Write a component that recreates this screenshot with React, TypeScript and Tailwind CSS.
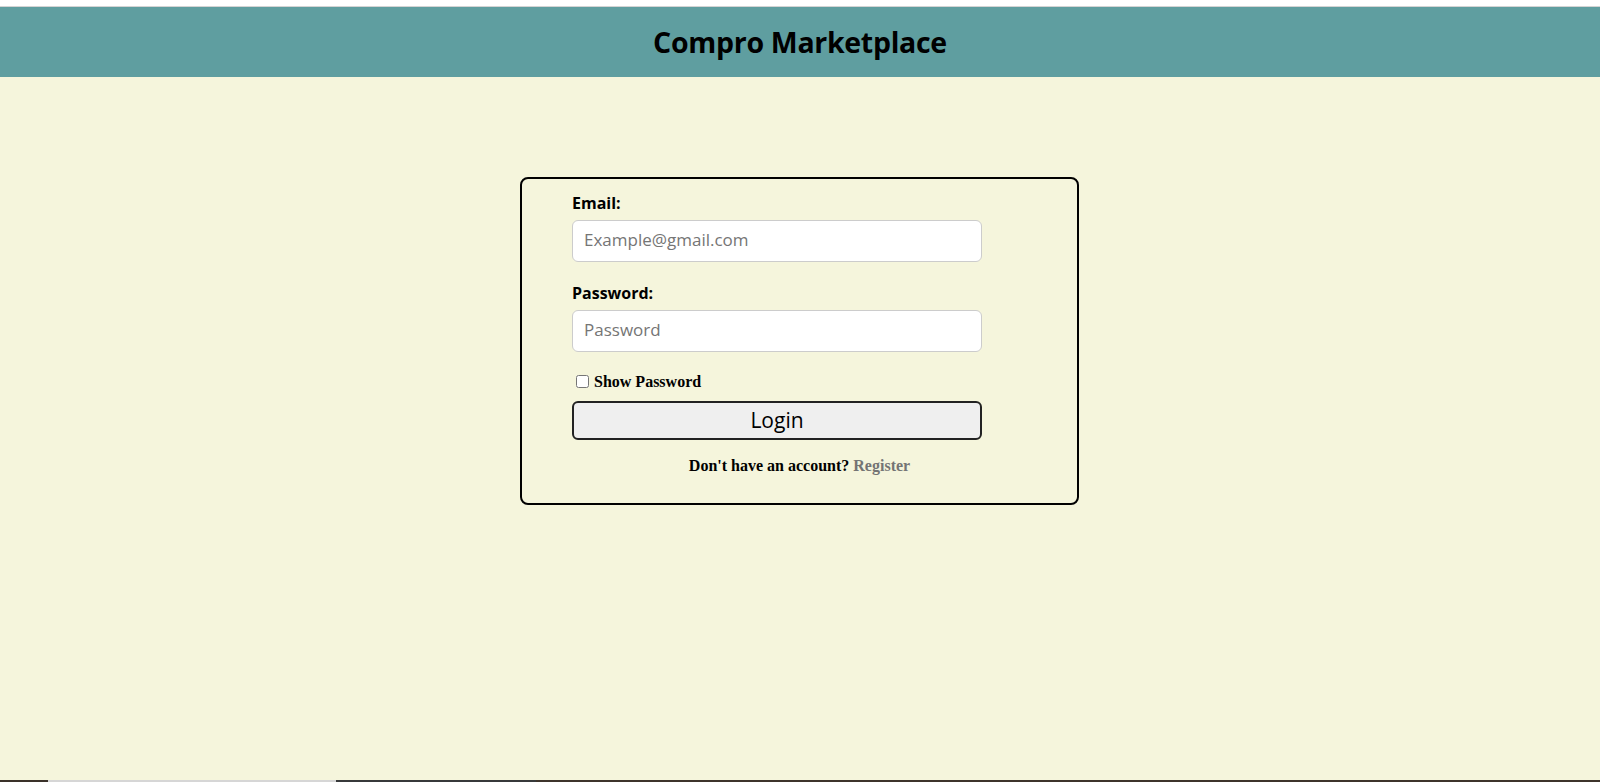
import { useState } from "react";

export default function App() {
  const [show, setShow] = useState(false);

  return (
    <div className="min-h-screen flex flex-col bg-[#f5f5dc] font-['Open_Sans',sans-serif]">
      {/* top browser edge */}
      <div className="h-[7px] bg-white border-b border-[#d4d4d4]" />

      {/* Header */}
      <header className="h-[70px] bg-[#5f9ea0] flex items-center justify-center">
        <h1 className="text-[28.5px] font-bold text-black leading-none tracking-[-0.3px]">Compro Marketplace</h1>
      </header>

      {/* Login card */}
      <main className="flex-1 flex justify-center pt-[100px] pr-[1px]">
        <div className="w-[559px] self-start border-2 border-black rounded-lg pt-[13px] pb-[28px]">
          <form className="flex flex-col pl-[50px]" onSubmit={(e) => e.preventDefault()}>
            <label className="text-[16px] font-bold leading-[22px] text-black mb-[6px]">Email:</label>
            <input
              type="email"
              placeholder="Example@gmail.com"
              className="w-[410px] h-[42px] bg-white border border-[#cccccc] rounded-md px-[11px] pb-[3px] text-[17px] placeholder:text-[#757575] outline-none"
            />

            <label className="text-[16px] font-bold leading-[22px] text-black mt-[20px] mb-[6px]">Password:</label>
            <input
              type={show ? "text" : "password"}
              placeholder="Password"
              className="w-[410px] h-[42px] bg-white border border-[#cccccc] rounded-md px-[11px] pb-[3px] text-[17px] placeholder:text-[#757575] outline-none"
            />

            <label className="flex items-center mt-[21px] pl-[4px] h-[17px] font-['Liberation_Serif',serif] text-[16px] font-bold text-black leading-[17px]">
              <input
                type="checkbox"
                checked={show}
                onChange={() => setShow(!show)}
                className="w-[13px] h-[13px] mr-[5px] m-0"
              />
              Show Password
            </label>

            <button
              type="submit"
              className="w-[410px] h-[39px] mt-[11px] bg-[#efefef] border-2 border-[#222] rounded-md text-[21px] text-black leading-none"
            >
              Login
            </button>
          </form>

          <p className="mt-[16px] text-center font-['Liberation_Serif',serif] text-[16px] font-bold leading-[19px] text-black">
            Don't have an account? <a href="#" className="text-[#747474]">Register</a>
          </p>
        </div>
      </main>

      {/* bottom edge of the taskbar */}
      <div className="h-[2px] flex">
        <div className="w-[48px] bg-[#3a3129]" />
        <div className="w-[288px] bg-[#d6d6d6]" />
        <div className="w-[200px] bg-[#37393a]" />
        <div className="flex-1 bg-[#3e342b]" />
      </div>
    </div>
  );
}
